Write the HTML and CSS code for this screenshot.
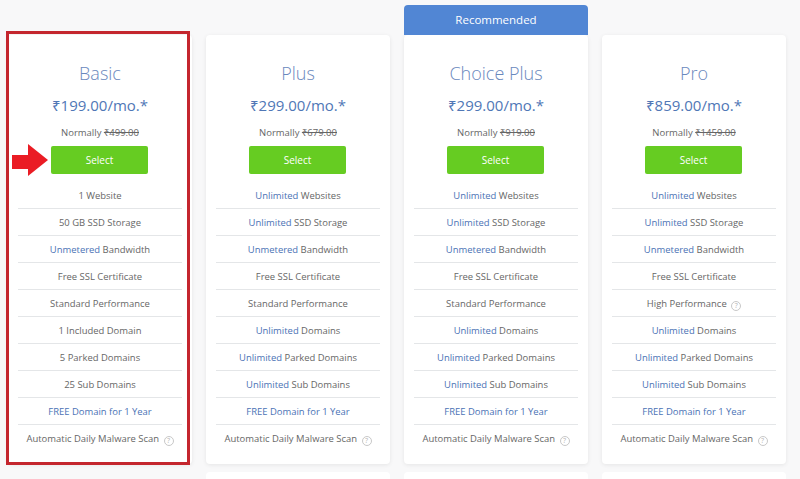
FILE: index.html
```html
<!DOCTYPE html>
<html lang="en">
<head>
<meta charset="utf-8">
<title>Plans</title>
<link rel="stylesheet" href="styles.css">
</head>
<body>
<main class="plans">
  <section class="card">
    <h2 class="name">Basic</h2>
    <p class="price">₹199.00/mo.*</p>
    <p class="normal">Normally <s>₹499.00</s></p>
    <a class="select">Select</a>
    <ul class="features">
      <li>1 Website</li>
      <li>50 GB SSD Storage</li>
      <li><b>Unmetered</b> Bandwidth</li>
      <li>Free SSL Certificate</li>
      <li>Standard Performance</li>
      <li>1 Included Domain</li>
      <li>5 Parked Domains</li>
      <li>25 Sub Domains</li>
      <li><b>FREE Domain for 1 Year</b></li>
      <li>Automatic Daily Malware Scan <i class="help">?</i></li>
    </ul>
  </section>
  <section class="card">
    <h2 class="name">Plus</h2>
    <p class="price">₹299.00/mo.*</p>
    <p class="normal">Normally <s>₹679.00</s></p>
    <a class="select">Select</a>
    <ul class="features">
      <li><b>Unlimited</b> Websites</li>
      <li><b>Unlimited</b> SSD Storage</li>
      <li><b>Unmetered</b> Bandwidth</li>
      <li>Free SSL Certificate</li>
      <li>Standard Performance</li>
      <li><b>Unlimited</b> Domains</li>
      <li><b>Unlimited</b> Parked Domains</li>
      <li><b>Unlimited</b> Sub Domains</li>
      <li><b>FREE Domain for 1 Year</b></li>
      <li>Automatic Daily Malware Scan <i class="help">?</i></li>
    </ul>
  </section>
  <section class="card">
    <div class="ribbon">Recommended</div>
    <h2 class="name">Choice Plus</h2>
    <p class="price">₹299.00/mo.*</p>
    <p class="normal">Normally <s>₹919.00</s></p>
    <a class="select">Select</a>
    <ul class="features">
      <li><b>Unlimited</b> Websites</li>
      <li><b>Unlimited</b> SSD Storage</li>
      <li><b>Unmetered</b> Bandwidth</li>
      <li>Free SSL Certificate</li>
      <li>Standard Performance</li>
      <li><b>Unlimited</b> Domains</li>
      <li><b>Unlimited</b> Parked Domains</li>
      <li><b>Unlimited</b> Sub Domains</li>
      <li><b>FREE Domain for 1 Year</b></li>
      <li>Automatic Daily Malware Scan <i class="help">?</i></li>
    </ul>
  </section>
  <section class="card">
    <h2 class="name">Pro</h2>
    <p class="price">₹859.00/mo.*</p>
    <p class="normal">Normally <s>₹1459.00</s></p>
    <a class="select">Select</a>
    <ul class="features">
      <li><b>Unlimited</b> Websites</li>
      <li><b>Unlimited</b> SSD Storage</li>
      <li><b>Unmetered</b> Bandwidth</li>
      <li>Free SSL Certificate</li>
      <li>High Performance <i class="help">?</i></li>
      <li><b>Unlimited</b> Domains</li>
      <li><b>Unlimited</b> Parked Domains</li>
      <li><b>Unlimited</b> Sub Domains</li>
      <li><b>FREE Domain for 1 Year</b></li>
      <li>Automatic Daily Malware Scan <i class="help">?</i></li>
    </ul>
  </section>
  <div class="card stub first"></div>
  <div class="card stub"></div>
  <div class="card stub"></div>
  <div class="highlight"></div>
  <svg class="arrow" viewBox="0 0 36 32" aria-hidden="true"><polygon points="0,11 16,11 16,0 36,16 16,32 16,25 0,25" /></svg>
</main>
</body>
</html>
```
FILE: styles.css
```css
* { box-sizing: border-box; }
html, body { margin: 0; height: 100%; }
body {
  background: #f8f8f9;
  overflow: hidden;
  font-family: "Open Sans", "Noto Sans", "DejaVu Sans", sans-serif;
  color: #666;
}
.plans {
  position: relative;
  display: grid;
  grid-template-columns: repeat(4, 184px);
  column-gap: 14px;
  row-gap: 8px;
  padding: 35px 0 0 8px;
}
.card {
  position: relative;
  height: 429px;
  padding: 0 10px;
  background: #fff;
  border-radius: 4px;
  box-shadow: 0 1px 4px rgba(0, 0, 0, 0.08);
  text-align: center;
}
.stub { height: 7px; border-radius: 4px 4px 0 0; box-shadow: none; }
.first { grid-column-start: 2; }
.ribbon {
  position: absolute;
  left: 0;
  right: 0;
  top: -30px;
  height: 30px;
  line-height: 30px;
  background: #5186d4;
  border-radius: 4px 4px 0 0;
  color: #fff;
  font-size: 11.5px;
  font-weight: 400;
}
.name {
  margin: 0;
  padding-top: 25px;
  height: 51px;
  line-height: 26px;
  font-size: 18px;
  font-weight: 300;
  color: #6a88bd;
}
.price {
  margin: 7px 0 0;
  line-height: 24px;
  font-size: 15px;
  font-weight: 400;
  color: #5077b6;
}
.normal {
  margin: 9px 0 0;
  line-height: 14px;
  font-size: 9.5px;
  color: #666;
}
.select {
  display: block;
  width: 97px;
  height: 28px;
  margin: 6px 0 0 33px;
  line-height: 28px;
  background: #66cc22;
  border-radius: 2px;
  color: #fff;
  font-size: 10px;
}
.features {
  list-style: none;
  margin: 8px 0 0;
  padding: 0;
}
.features li {
  height: 27px;
  line-height: 28px;
  font-size: 9.45px;
  border-bottom: 1px solid #e4e6e8;
}
.features li:last-child { border-bottom: 0; }
.features b { font-weight: 400; color: #4a72b5; }
.help {
  display: inline-block;
  width: 10px;
  height: 10px;
  margin-left: 2px;
  border: 1px solid #c8c8c8;
  border-radius: 50%;
  color: #b5b5b5;
  font-size: 7px;
  font-style: normal;
  line-height: 8px;
  vertical-align: -1px;
}
.highlight {
  position: absolute;
  left: 6px;
  top: 31px;
  width: 184px;
  height: 434px;
  border: 3px solid #c4262e;
}
.arrow {
  position: absolute;
  left: 12px;
  top: 144px;
  width: 36px;
  height: 32px;
  fill: #ea1c24;
}
```
